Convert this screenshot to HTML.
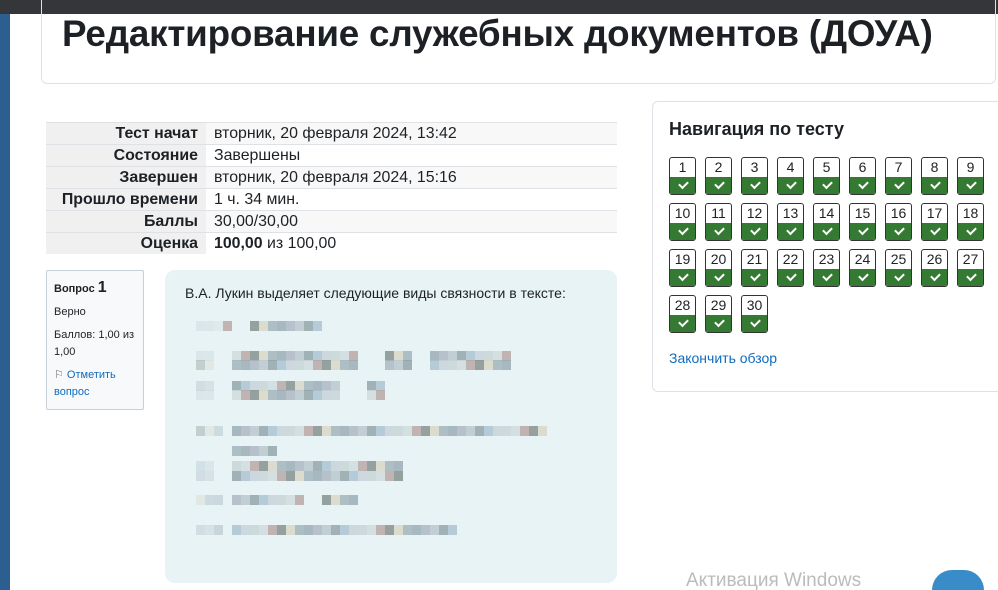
<!DOCTYPE html><html><head><meta charset="utf-8"><style>
html,body{margin:0;width:998px;height:590px;overflow:hidden}
body{background:#fff;font-family:"Liberation Sans","DejaVu Sans",sans-serif;position:relative;color:#1d2125}
#w{position:absolute;left:0;top:0;width:998px;height:590px;overflow:hidden}
.a{position:absolute}
.tb{left:0;top:0;width:998px;height:14px;background:#35363a}
.lb{left:0;top:14px;width:10px;height:576px;background:#2c5f90}
.card{left:41px;top:-5px;width:955px;height:89px;border:1px solid #dee2e6;border-radius:6px;box-sizing:border-box}
h1{position:absolute;left:62px;top:13px;margin:0;font-size:36.8px;font-weight:bold;letter-spacing:-0.2px}
table{position:absolute;left:46px;top:122px;width:571px;border-collapse:collapse;font-size:15.9px}
td{height:21px;padding:0;border-top:1px solid #dee2e6;line-height:21px}
td.l{width:152px;text-align:right;font-weight:bold;padding-right:8px;background:#f0f0f0}
td.v{padding-left:8px}
tr.s td.v{background:#f8f8f8}
.nav{left:652px;top:101px;width:360px;height:291px;border:1px solid #dee2e6;border-radius:6px;box-sizing:border-box}
.nt{left:669px;top:119px;font-size:18px;font-weight:bold}
.b{position:absolute;width:27px;height:38px;border:1px solid #333;border-radius:3px;box-sizing:border-box;overflow:hidden;background:#fff}
.b span{display:block;height:19px;text-align:center;font-size:14px;line-height:18px}
.b i{display:block;height:19px;background:#357a32;position:relative}
.b i:after{content:"";position:absolute;left:9px;top:4px;width:7px;height:4px;border-left:2px solid #fff;border-bottom:2px solid #fff;transform:rotate(-45deg)}
.link{color:#0f6cbf}
.qi{left:46px;top:270px;width:98px;height:140px;background:#f8f9fa;border:1px solid #cad0d7;box-sizing:border-box;border-radius:2px;font-size:11px;padding:8px 0 0 7px;line-height:17px}
.qc{left:165px;top:270px;width:452px;height:313px;background:#e7f3f5;border-radius:10px}
.px{position:absolute;height:9px}
</style></head><body><div id="w">
<div class="a tb"></div><div class="a lb"></div>
<div class="a card"></div>
<h1>Редактирование служебных документов (ДОУА)</h1>
<table>
<tr class="s"><td class="l">Тест начат</td><td class="v">вторник, 20 февраля 2024, 13:42</td></tr>
<tr><td class="l">Состояние</td><td class="v">Завершены</td></tr>
<tr class="s"><td class="l">Завершен</td><td class="v">вторник, 20 февраля 2024, 15:16</td></tr>
<tr><td class="l">Прошло времени</td><td class="v">1 ч. 34 мин.</td></tr>
<tr class="s"><td class="l">Баллы</td><td class="v">30,00/30,00</td></tr>
<tr><td class="l">Оценка</td><td class="v"><b>100,00</b> из 100,00</td></tr>
</table>
<div class="a nav"></div>
<div class="a nt">Навигация по тесту</div>
<div id="btns"></div>
<div class="a link" style="left:669px;top:350px;font-size:14px">Закончить обзор</div>
<div class="a qi"><b>Вопрос <span style="font-size:16px">1</span></b><div style="margin-top:6px">Верно</div><div style="margin-top:6px">Баллов: 1,00 из 1,00</div><div style="margin-top:6px" class="link"><span style="color:#666">⚐</span> Отметить вопрос</div></div>
<div class="a qc"></div>
<div class="a" style="left:185px;top:285px;font-size:14px">В.А. Лукин выделяет следующие виды связности в тексте:</div>
<div id="pix"></div>
<div class="a" style="left:686px;top:570px;font-size:19px;color:#bbb">Активация Windows</div>
<div class="a" style="left:932px;top:570px;width:52px;height:20px;border-radius:26px 26px 0 0;background:#3a8cc8"></div>
</div>
<script>
var h='';
for(var n=1;n<=30;n++){var r=Math.floor((n-1)/9),c=(n-1)%9;h+='<div class="b" style="left:'+(669+c*36)+'px;top:'+(157+r*46)+'px"><span>'+n+'</span><i></i></div>';}
document.getElementById('btns').innerHTML=h;
var rows=[[321,187,[[1,5],[7,15]]],[351,187,[[1,3],[5,19],[22,25],[27,36]]],[360,187,[[1,3],[5,19],[22,25],[27,36]]],[381,187,[[1,3],[5,17],[20,22]]],[390,187,[[1,3],[5,17],[20,22]]],[426,187,[[1,4],[5,40]]],[446,187,[[5,10]]],[461,187,[[1,3],[5,24]]],[471,187,[[1,3],[5,24]]],[495,187,[[1,4],[5,13],[15,18],[18,19]]],[525,187,[[1,4],[5,30]]]];
var cols=['#a9c0cf','#9fb0b8','#c7d3d6','#aab4c0','#b7a3a0','#8fa1a6','#d8d4c4','#c6cfd8','#99a9b4','#d0dadd','#b8c6cc','#7f8c8a'];
var p='';var k=0;
rows.forEach(function(R){R[2].forEach(function(s){for(var i=s[0];i<s[1];i++){k++;p+='<div class="px" style="left:'+(R[1]+i*9)+'px;top:'+R[0]+'px;width:9px;height:10px;background:'+cols[(k*7)%cols.length]+';opacity:'+(i<4?0.35:0.8)+'"></div>';}});});
document.getElementById('pix').innerHTML=p;
</script>
</body></html>
